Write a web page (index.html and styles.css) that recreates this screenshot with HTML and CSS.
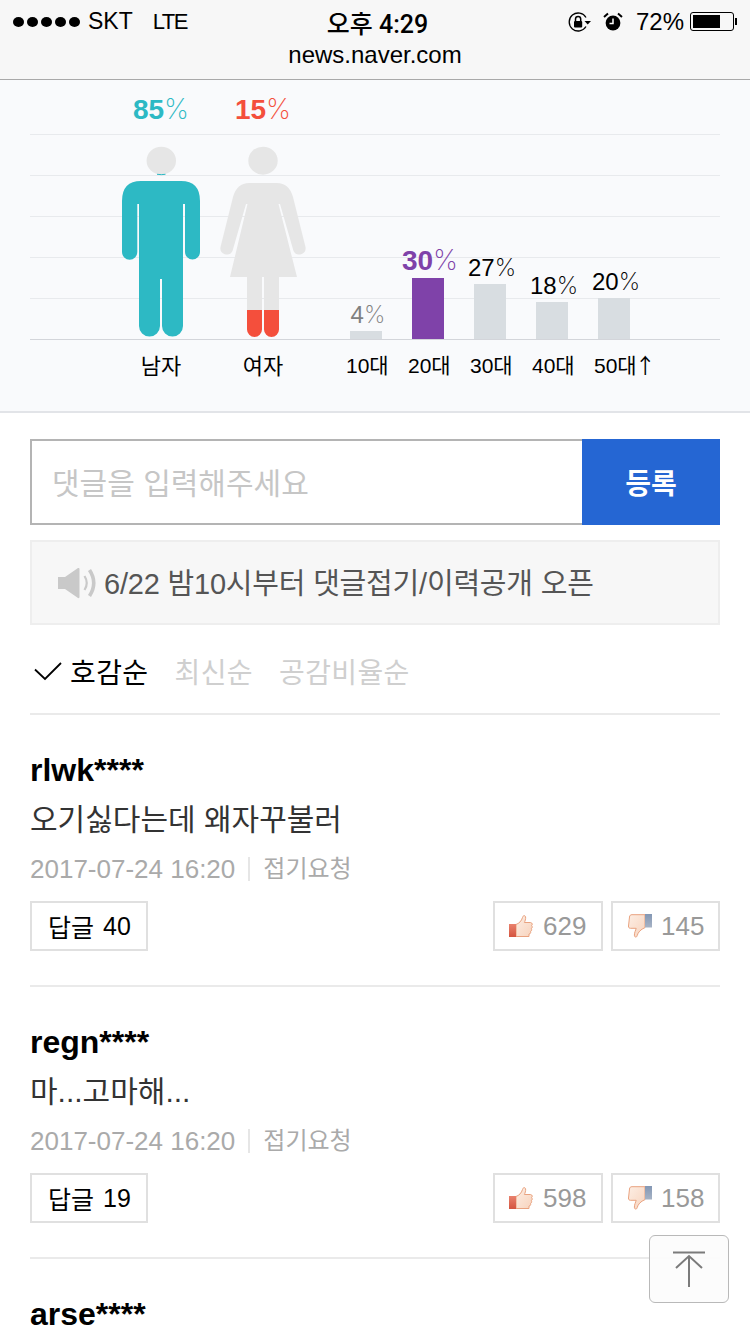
FILE: index.html
```html
<!DOCTYPE html>
<html lang="ko">
<head>
    <meta charset="UTF-8">
    <meta name="viewport" content="width=device-width, initial-scale=1.0">
    <title>news.naver.com</title>
    <link rel="stylesheet" href="styles.css">
</head>
<body>
    <!-- shared gradients and vote icons -->
    <svg class="defs" aria-hidden="true">
        <defs>
            <linearGradient id="handFill" x1="0" y1="0" x2="1" y2="1">
                <stop offset="0" stop-color="#fdeee4"/>
                <stop offset="1" stop-color="#f7d3bd"/>
            </linearGradient>
            <linearGradient id="cuffRed" x1="0" y1="0" x2="0" y2="1">
                <stop offset="0" stop-color="#e9816d"/>
                <stop offset="1" stop-color="#d4543f"/>
            </linearGradient>
            <linearGradient id="cuffBlue" x1="0" y1="0" x2="0" y2="1">
                <stop offset="0" stop-color="#8397b4"/>
                <stop offset="1" stop-color="#a7b3c5"/>
            </linearGradient>
            <symbol id="thumbUp" viewBox="0 0 24 24">
                <path d="M7 10.5 C10 9.5 12.5 7 13.5 3.5 C13.8 1.5 16.2 .8 16.6 3 C16.9 5 16 7 15.4 8.5 L21.5 8.5 C23.6 8.8 23.6 11 22.6 11.6 C23.6 12.4 23.4 14.2 22.3 14.6 C23 15.6 22.6 17 21.6 17.4 C22 18.6 21.4 20 20 20 L20 22.5 L7 22.5 Z" fill="url(#handFill)" stroke="#e9a27f" stroke-width="1"/>
                <rect x="0" y="10" width="7" height="13" fill="url(#cuffRed)"/>
            </symbol>
            <symbol id="thumbDown" viewBox="0 0 24 24">
                <path d="M17 0.7 L4 0.7 C2.4 .7 1.6 1.5 1.5 3 L0.5 12 C.3 13.5 1.2 14.3 2.5 14.3 L8.2 14.3 C7.6 16.5 6.4 18.5 6.4 21 C6.4 23.6 8.6 23.8 9.2 21.6 C10 18.4 12.5 15.5 17 13.6 Z" fill="url(#handFill)" stroke="#e9a27f" stroke-width="1"/>
                <rect x="17" y="0" width="7" height="13.5" fill="url(#cuffBlue)"/>
            </symbol>
        </defs>
    </svg>

    <header class="browser-bar">
        <div class="status-bar">
            <div class="status-left">
                <span class="signal"><i></i><i></i><i></i><i></i><i></i></span>
                <span class="carrier">SKT</span>
                <span class="network">LTE</span>
            </div>
            <div class="status-time">오후 4:29</div>
            <div class="status-right">
                <svg class="icon-lock" viewBox="0 0 23 20" width="23" height="20">
                    <path d="M18 14.500 A9 9 0 1 1 18 5.500" fill="none" stroke="#000" stroke-width="1.300"/>
                    <path d="M16.500 9 L23 9 L19.700 12.500 Z" fill="#000"/>
                    <path d="M7.500 9 V7 a2.600 2.600 0 0 1 5.200 0 V9" fill="none" stroke="#000" stroke-width="1.500"/>
                    <rect x="6" y="9" width="8.200" height="6.500" rx="1" fill="#000"/>
                </svg>
                <svg class="icon-alarm" viewBox="0 0 20 20" width="20" height="20">
                    <circle cx="10" cy="11" r="7.400" fill="#000"/>
                    <path d="M10 6.500 V11.500 H6.500" fill="none" stroke="#fff" stroke-width="1.500"/>
                    <path d="M1 5 L5 1.500 M19 5 L15 1.500" stroke="#000" stroke-width="2"/>
                </svg>
                <span class="battery-pct">72%</span>
                <span class="battery"><b></b></span>
            </div>
        </div>
        <div class="url">news.naver.com</div>
    </header>

    <section class="stats">
        <div class="plot">
            <div class="plot-grid"></div>
            <div class="gender">
                <div class="gender-pct male"><b>85</b><i>%</i></div>
                <svg class="figure" viewBox="120 145 82 194" width="82" height="194">
                    <ellipse cx="161.300" cy="160.700" rx="14.700" ry="14" fill="#e6e6e6"/>
                    <path d="M157 174.300 Q161.300 175 165.500 174.300" fill="none" stroke="#2db9c4" stroke-width="1"/>
                    <path fill="#2db9c4" d="M141 181 H181 Q200 181 200 201 V252 A7.500 7.500 0 0 1 185 252 V204 H183 V326 A10.500 10.500 0 0 1 162 326 V279 H160 V326 A10.500 10.500 0 0 1 139 326 V204 H137.300 V252 A7.600 7.600 0 0 1 122 252 V201 Q122 181 141 181 Z"/>
                </svg>
            </div>
            <div class="gender">
                <div class="gender-pct female"><b>15</b><i>%</i></div>
                <svg class="figure" viewBox="218 145 90 194" width="90" height="194">
                    <ellipse cx="263" cy="160.700" rx="14.700" ry="14" fill="#e6e6e6"/>
                    <path fill="#e6e6e6" d="M249 183 H277 Q289 183 293 197 L305.500 247 A6.400 6.400 0 0 1 293.500 251 L280 204 L278.500 204 L297 277 H279 V326 A7.500 7.500 0 0 1 264 326 V277 H262 V326 A7.500 7.500 0 0 1 247 326 V277 H230 L247.500 204 L246 204 L232.500 251 A6.400 6.400 0 0 1 220.500 247 L233 197 Q237 183 249 183 Z"/>
                    <path fill="#f44f3c" d="M247 310 H262 V329.500 A7.500 7.500 0 0 1 247 329.500 Z M264 310 H279 V329.500 A7.500 7.500 0 0 1 264 329.500 Z"/>
                </svg>
            </div>
            <div class="ages">
                <div class="age">
                    <span class="age-pct low">4<i>%</i></span>
                    <div class="bar" style="height: 8px"></div>
                </div>
                <div class="age">
                    <span class="age-pct top"><b>30</b><i>%</i></span>
                    <div class="bar bar-top" style="height: 61px"></div>
                </div>
                <div class="age">
                    <span class="age-pct">27<i>%</i></span>
                    <div class="bar" style="height: 55px"></div>
                </div>
                <div class="age">
                    <span class="age-pct">18<i>%</i></span>
                    <div class="bar" style="height: 37px"></div>
                </div>
                <div class="age">
                    <span class="age-pct">20<i>%</i></span>
                    <div class="bar" style="height: 41px"></div>
                </div>
            </div>
        </div>
        <div class="plot-labels">
            <span class="gender-label">남자</span>
            <span class="gender-label">여자</span>
            <div class="age-labels">
                <span>10대</span>
                <span>20대</span>
                <span>30대</span>
                <span>40대</span>
                <span>50대<small>↑</small></span>
            </div>
        </div>
    </section>

    <main class="comments">
        <form class="comment-form">
            <input class="comment-input" type="text" placeholder="댓글을 입력해주세요">
            <button class="comment-submit" type="button">등록</button>
        </form>

        <div class="notice">
            <svg class="icon-speaker" viewBox="0 0 38 32" width="38" height="32">
                <path d="M0 10 H7 L20 1 Q21.500 .5 21.500 2 V30 Q21.500 31.500 20 31 L7 22 H0 Z" fill="#c9c9c9"/>
                <path d="M26.500 9 Q31 16 26.500 23" fill="none" stroke="#c9c9c9" stroke-width="2.200"/>
                <path d="M31.500 3 Q40 16 31.500 29" fill="none" stroke="#c9c9c9" stroke-width="3.600"/>
            </svg>
            <span>6/22 밤10시부터 댓글접기/이력공개 오픈</span>
        </div>

        <nav class="sort">
            <a class="sort-item active">
                <svg class="icon-check" viewBox="0 0 28 20" width="28" height="20">
                    <path d="M1 8.500 L11 18 L27 2" fill="none" stroke="#000" stroke-width="1.800"/>
                </svg>
                호감순
            </a>
            <a class="sort-item">최신순</a>
            <a class="sort-item">공감비율순</a>
        </nav>

        <article class="comment">
            <div class="comment-name">rlwk****</div>
            <p class="comment-text">오기싫다는데 왜자꾸불러</p>
            <div class="comment-meta">
                <span>2017-07-24 16:20</span>
                <span class="meta-report">접기요청</span>
            </div>
            <div class="comment-actions">
                <button class="reply-btn" type="button">답글<em>40</em></button>
                <div class="votes">
                    <button class="vote-btn vote-up" type="button"><svg width="24" height="24"><use href="#thumbUp"/></svg>629</button>
                    <button class="vote-btn vote-down" type="button"><svg width="24" height="24"><use href="#thumbDown"/></svg>145</button>
                </div>
            </div>
        </article>

        <article class="comment">
            <div class="comment-name">regn****</div>
            <p class="comment-text">마...고마해...</p>
            <div class="comment-meta">
                <span>2017-07-24 16:20</span>
                <span class="meta-report">접기요청</span>
            </div>
            <div class="comment-actions">
                <button class="reply-btn" type="button">답글<em>19</em></button>
                <div class="votes">
                    <button class="vote-btn vote-up" type="button"><svg width="24" height="24"><use href="#thumbUp"/></svg>598</button>
                    <button class="vote-btn vote-down" type="button"><svg width="24" height="24"><use href="#thumbDown"/></svg>158</button>
                </div>
            </div>
        </article>

        <article class="comment">
            <div class="comment-name">arse****</div>
        </article>
    </main>

    <button class="to-top" type="button" aria-label="top">
        <svg viewBox="0 0 34 36" width="34" height="36">
            <path d="M1 1.500 H33 M17 5 V36 M4 17 L17 5 L30 17" fill="none" stroke="#7b7b7b" stroke-width="2"/>
        </svg>
    </button>
</body>
</html>
```

FILE: styles.css
```css
* {
    box-sizing: border-box;
}
html, body {
    margin: 0;
    padding: 0;
}
body {
    position: relative;
    width: 750px;
    height: 1334px;
    overflow: hidden;
    background: #fff;
    color: #000;
    font-family: "Liberation Sans", "Noto Sans CJK KR", sans-serif;
}
.defs {
    position: absolute;
    width: 0;
    height: 0;
}

/* browser chrome */
.browser-bar {
    height: 80px;
    background: #f7f7f7;
    border-bottom: 1px solid #a9a9a9;
}
.status-bar {
    display: grid;
    grid-template-columns: 1fr auto 1fr;
    align-items: center;
    height: 41px;
    padding: 2px 16px 0 13px;
    font-size: 24px;
}
.status-left {
    display: flex;
    align-items: center;
}
.signal {
    display: flex;
    gap: 3px;
    margin-right: 8px;
}
.signal i {
    width: 11px;
    height: 10px;
    border-radius: 50%;
    background: #000;
}
.carrier {
    margin-right: 20px;
    font-size: 23px;
}
.network {
    font-size: 22px;
    letter-spacing: -1.5px;
}
.status-time {
    padding-left: 8px;
    font-family: Roboto, "Noto Sans CJK KR", sans-serif;
    font-weight: 500;
    font-size: 25px;
}
.status-right {
    display: flex;
    align-items: center;
    justify-content: flex-end;
}
.icon-lock {
    margin-right: 12px;
}
.icon-alarm {
    margin-right: 13px;
}
.battery-pct {
    margin-right: 6px;
}
.battery {
    position: relative;
    width: 44px;
    height: 19px;
    padding: 2px;
    border: 1px solid #000;
    border-radius: 3px;
}
.battery::after {
    content: "";
    position: absolute;
    top: 5px;
    right: -4px;
    width: 2px;
    height: 7px;
    background: #000;
}
.battery b {
    display: block;
    width: 72%;
    height: 100%;
    background: #000;
}
.url {
    text-align: center;
    font-size: 24px;
    line-height: 28px;
}

/* gender and age chart */
.stats {
    height: 333px;
    padding: 0 30px;
    background: #f9fafc;
    border-bottom: 2px solid #e2e4e8;
}
.plot {
    position: relative;
    display: flex;
    align-items: flex-end;
    height: 260px;
    padding-left: 80px;
    border-bottom: 1px solid #d3d5da;
}
.plot-grid {
    position: absolute;
    top: 54px;
    left: 0;
    right: 0;
    bottom: 0;
    background-image: linear-gradient(#e8eaed 1px, transparent 1px);
    background-size: 100% 41px;
}
/* the percent sign is set thinner than the number */
.gender-pct i, .age-pct i {
    font-family: Inter, "Liberation Sans", sans-serif;
    font-style: normal;
    font-weight: 200;
}
.gender {
    position: relative;
    display: flex;
    flex-direction: column;
    align-items: center;
    width: 102px;
}
.gender-pct {
    font-size: 28px;
    line-height: 32px;
    margin-bottom: 19px;
}
.gender-pct.male {
    color: #2db9c4;
}
.gender-pct.female {
    color: #f44f3c;
}
.figure {
    display: block;
}
.ages {
    position: relative;
    display: flex;
    align-items: flex-end;
    margin-left: 21px;
}
.age {
    display: flex;
    flex-direction: column;
    align-items: center;
    width: 62px;
}
.age-pct {
    padding-left: 4px;
    font-size: 24px;
    line-height: 28px;
    margin-bottom: 2px;
}
.age-pct.low {
    color: #808080;
}
.age-pct.top {
    margin-bottom: 3px;
    font-size: 28px;
    color: #7f42a9;
}
.bar {
    width: 32px;
    background: #d8dde1;
}
.bar-top {
    background: #7f42a9;
}
.plot-labels {
    display: flex;
    align-items: center;
    height: 52px;
    padding: 0 0 4px 80px;
    font-size: 22px;
}
.gender-label {
    width: 102px;
    text-align: center;
}
.age-labels {
    display: flex;
    margin-left: 21px;
    font-size: 21px;
}
.age-labels span {
    width: 62px;
    padding-left: 11px;
    white-space: nowrap;
}
.age-labels small {
    margin-left: -2px;
    font-family: "Noto Sans CJK KR", sans-serif;
    font-size: 21px;
}

/* comments */
.comments {
    height: 921px;
    overflow: hidden;
    padding: 26px 30px 0;
}
.comment-form {
    display: flex;
    height: 86px;
}
.comment-input {
    flex: 1;
    min-width: 0;
    height: 100%;
    padding: 3px 20px 0;
    border: 2px solid #b4b4b4;
    border-right: none;
    border-radius: 0;
    outline: none;
    font-family: inherit;
    font-size: 30px;
}
.comment-input::placeholder {
    color: #c6c6c6;
    opacity: 1;
}
.comment-submit {
    width: 138px;
    height: 100%;
    border: none;
    background: #2566d3;
    color: #fff;
    font-family: inherit;
    font-size: 28px;
    font-weight: bold;
}
.notice {
    display: flex;
    align-items: center;
    height: 85px;
    margin-top: 15px;
    padding: 0 0 4px 26px;
    background: #f7f7f7;
    border: 2px solid #eee;
    color: #555;
    font-size: 29px;
    letter-spacing: -0.2px;
}
.icon-speaker {
    margin: 4px 8px 0 0;
}
.sort {
    display: flex;
    align-items: center;
    gap: 26px;
    height: 90px;
    padding-top: 3px;
    border-bottom: 2px solid #eaeaea;
    font-size: 28px;
    letter-spacing: 0.4px;
    color: #cfcfcf;
}
.sort-item.active {
    display: flex;
    align-items: center;
    gap: 8px;
    color: #000;
}
.icon-check {
    margin-left: 4px;
}
.comment {
    height: 272px;
    padding-top: 35px;
    border-bottom: 2px solid #eaeaea;
}
.comment:last-child {
    height: auto;
    border-bottom: none;
}
.comment-name {
    font-size: 32px;
    font-weight: bold;
    line-height: 40px;
}
.comment-text {
    margin: 10px 0 0;
    font-size: 30px;
    line-height: 40px;
    color: #333;
}
.comment-meta {
    display: flex;
    align-items: center;
    height: 36px;
    margin-top: 11px;
    font-size: 26px;
    color: #aaa;
}
.meta-report {
    margin-left: 13px;
    padding-left: 13px;
    border-left: 2px solid #e6e6e6;
    font-size: 24px;
    line-height: 24px;
}
.comment-actions {
    display: flex;
    justify-content: space-between;
    margin-top: 14px;
}
.reply-btn, .vote-btn {
    display: flex;
    align-items: center;
    height: 50px;
    padding: 0;
    background: #fff;
    border: 2px solid #e0e0e0;
    font-family: inherit;
    font-size: 26px;
}
.reply-btn {
    width: 118px;
    padding-left: 16px;
    color: #000;
    font-size: 25px;
}
.reply-btn em {
    margin-left: 9px;
    font-style: normal;
    font-size: 25px;
}
.votes {
    display: flex;
    gap: 8px;
}
.vote-btn {
    color: #999;
}
.vote-up {
    width: 110px;
    gap: 10px;
    padding-left: 14px;
}
.vote-down {
    width: 109px;
    gap: 9px;
    padding-left: 15px;
}

/* floating top button */
.to-top {
    position: absolute;
    left: 649px;
    top: 1235px;
    display: flex;
    align-items: center;
    justify-content: center;
    width: 80px;
    height: 68px;
    padding: 0;
    background: rgba(252, 252, 252, 0.95);
    border: 1px solid #b9b9b9;
    border-radius: 6px;
}
```
